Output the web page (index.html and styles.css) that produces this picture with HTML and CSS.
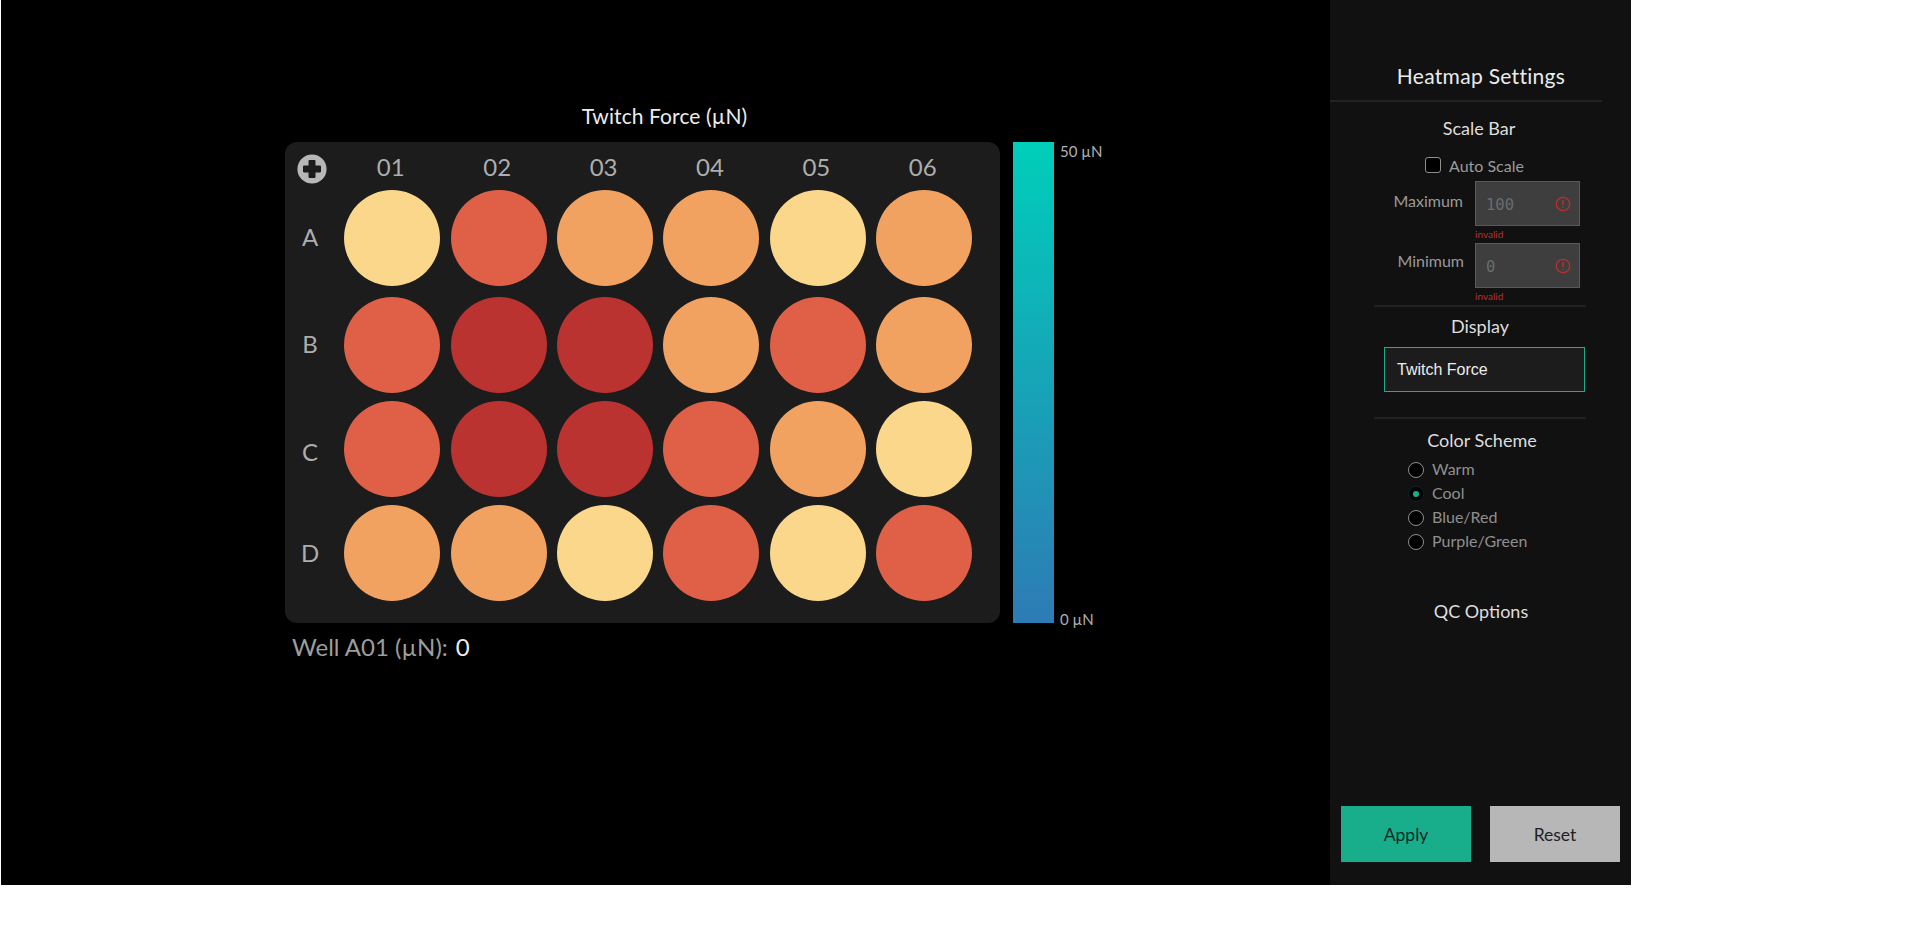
FILE: index.html
```html
<!DOCTYPE html>
<html lang="en">
<head>
<meta charset="utf-8">
<title>Heatmap</title>
<link rel="stylesheet" href="styles.css">
</head>
<body>
<div class="app">
  <main class="stage">
    <h1 class="plate-title">Twitch Force (µN)</h1>
    <div class="plate-row">
      <div class="plate">
        <div class="corner"><svg viewBox="0 0 30 30" width="30" height="30"><circle cx="15" cy="15" r="14.6" fill="#b7b7b7"/><path d="M12 6.500h6v5.500h5.500v6H18v5.500h-6V18H6.500v-6H12z" fill="#1c1c1c" stroke="#1c1c1c" stroke-linejoin="round"/></svg></div>
        <div class="col-head">01</div><div class="col-head">02</div><div class="col-head">03</div><div class="col-head">04</div><div class="col-head">05</div><div class="col-head">06</div>
        <div class="row-head">A</div>
        <div class="well c1"></div><div class="well c2"></div><div class="well c3"></div><div class="well c3"></div><div class="well c1"></div><div class="well c3"></div>
        <div class="row-head">B</div>
        <div class="well c2"></div><div class="well c4"></div><div class="well c4"></div><div class="well c3"></div><div class="well c2"></div><div class="well c3"></div>
        <div class="row-head row-c">C</div>
        <div class="well c2"></div><div class="well c4"></div><div class="well c4"></div><div class="well c2"></div><div class="well c3"></div><div class="well c1"></div>
        <div class="row-head row-d">D</div>
        <div class="well c3"></div><div class="well c3"></div><div class="well c1"></div><div class="well c2"></div><div class="well c1"></div><div class="well c2"></div>
      </div>
      <div class="gradient"></div>
      <div class="scale-labels"><span>50 µN</span><span>0 µN</span></div>
    </div>
    <div class="readout"><span class="readout-label">Well A01 (µN):</span><span class="readout-value">0</span></div>
  </main>
  <aside class="sidebar">
    <h2 class="side-title">Heatmap Settings</h2>
    <h3 class="section-title scale-title">Scale Bar</h3>
    <label class="auto"><span class="check"></span>Auto Scale</label>
    <div class="field field-max">
      <span class="field-label">Maximum</span>
      <div class="field-body">
        <div class="num-input"><span>100</span><svg viewBox="0 0 16 16" width="16" height="16"><circle cx="8" cy="8" r="6.700" fill="none" stroke="#b8302f" stroke-width="1.300"/><path d="M8 4v5M8 10.800v1.300" stroke="#b8302f" stroke-width="1.500" fill="none"/></svg></div>
        <div class="invalid">invalid</div>
      </div>
    </div>
    <div class="field field-min">
      <span class="field-label">Minimum</span>
      <div class="field-body">
        <div class="num-input"><span>0</span><svg viewBox="0 0 16 16" width="16" height="16"><circle cx="8" cy="8" r="6.700" fill="none" stroke="#b8302f" stroke-width="1.300"/><path d="M8 4v5M8 10.800v1.300" stroke="#b8302f" stroke-width="1.500" fill="none"/></svg></div>
        <div class="invalid">invalid</div>
      </div>
    </div>
    <hr class="rule">
    <h3 class="section-title display-title">Display</h3>
    <div class="select">Twitch Force</div>
    <hr class="rule rule-two">
    <h3 class="section-title scheme-title">Color Scheme</h3>
    <div class="radios">
      <label class="radio"><span class="dot"></span>Warm</label>
      <label class="radio"><span class="dot on"></span>Cool</label>
      <label class="radio"><span class="dot"></span>Blue/Red</label>
      <label class="radio"><span class="dot"></span>Purple/Green</label>
    </div>
    <h3 class="section-title qc-title">QC Options</h3>
    <div class="actions">
      <button class="btn apply">Apply</button>
      <button class="btn reset">Reset</button>
    </div>
  </aside>
</div>
</body>
</html>
```

FILE: styles.css
```css
* { box-sizing: border-box; }
html, body { margin: 0; padding: 0; background: #fff; }
body { font-family: "Lato", "Noto Sans", sans-serif; overflow: hidden; height: 930px; }
.app { margin-left: 1px; width: 1630px; height: 885px; display: flex; background: #000; }
.stage { width: 1329px; padding: 103px 0 0 284px; }
.plate-title { margin: 0 0 0 -3px; width: 765px; height: 27px; font-size: 21px; line-height: 26px; font-weight: 400; letter-spacing: .1px; color: #ececec; text-align: center; }
.plate-row { display: flex; margin-top: 12px; }
.plate { width: 715px; height: 481px; background: #1c1c1c; border-radius: 12px; display: grid; grid-template-columns: 54.100px repeat(6, 106.400px); grid-template-rows: 42px 108px 106px 102px 106px; align-items: center; justify-items: center; align-content: start; }
.corner { width: 30px; height: 30px; margin-top: 12px; }
.corner svg { display: block; }
.col-head { font-size: 24px; color: #adadad; margin-top: 7px; margin-right: 3px; }
.row-head { font-size: 24px; color: #adadad; margin: 0 4px 3px 0; }
.row-c { margin-bottom: 0; margin-top: 4px; }
.row-d { margin-bottom: 1px; }
.well { width: 96px; height: 96px; border-radius: 50%; }
.c1 { background: #fad78b; }
.c2 { background: #e06047; }
.c3 { background: #f2a260; }
.c4 { background: #bb3331; }
.gradient { width: 41px; height: 481px; margin-left: 13px; background: linear-gradient(#00ceba, #2d7bb5); }
.scale-labels { height: 481px; margin-left: 6px; display: flex; flex-direction: column; justify-content: space-between; font-size: 15px; line-height: 20px; color: #b0b0b0; }
.scale-labels span:first-child { margin-top: -1px; }
.scale-labels span:last-child { margin-bottom: -6px; }
.readout { display: flex; gap: 8px; margin: 8px 0 0 7px; font-size: 24px; line-height: 32px; }
.readout-label { color: #9d9d9d; }
.readout-value { color: #ececec; }
.sidebar { width: 301px; background: #111; display: flex; flex-direction: column; color: #ececec; }
.side-title { margin: 62px 29px 0 0; height: 40px; padding: 0 0 12px 30px; font-size: 21px; line-height: 27px; font-weight: 400; letter-spacing: .3px; text-align: center; color: #ececec; border-bottom: 2px solid #222; }
.section-title { margin: 0; width: 301px; font-size: 18px; line-height: 24px; font-weight: 400; color: #dedede; text-align: center; }
.scale-title { margin-top: 14px; width: 298px; }
.auto { display: flex; align-items: center; margin: 15px 0 0 95px; height: 20px; font-size: 16px; color: #9a9a9a; }
.check { width: 16px; height: 16px; background: #000; border: 1px solid #8e8e8e; border-radius: 3px; margin-right: 8px; }
.field { display: flex; }
.field-max { margin-top: 6px; }
.field-min { margin-top: 1px; }
.field-label { width: 134px; padding-top: 10px; font-size: 16px; line-height: 20px; color: #9a9a9a; text-align: right; }
.field-min .field-label { padding-top: 8px; }
.field-max .field-label { padding-right: 1px; }
.field-body { margin-left: 11px; }
.num-input { width: 105px; height: 45px; background: #3e3e3e; border: 1px solid #b8302f; display: flex; align-items: center; justify-content: space-between; padding: 0 8px 0 10px; font-family: "DejaVu Sans Mono", "Liberation Mono", monospace; font-size: 15.500px; color: #666c72; }
.num-input span { margin-top: 2px; }
.num-input svg { display: block; }
.invalid { font-size: 10px; line-height: 16px; color: #b8302f; }
.rule { width: 212px; height: 2px; margin: 0 0 0 44px; border: 0; background: #222; }
.field-min + .rule { margin-top: 1px; }
.display-title { margin-top: 7px; width: 300px; }
.select { width: 201px; height: 45px; margin: 9px 0 0 54px; padding-left: 12px; background: #1c1c1c; border: 1px solid #19ae8b; font-family: "Liberation Sans", Arial, sans-serif; font-size: 16px; line-height: 43px; color: #ececec; }
.rule-two { margin-top: 25px; }
.scheme-title { margin-top: 9px; padding-left: 3px; }
.radios { margin: 4px 0 0 78px; display: flex; flex-direction: column; }
.radio { display: flex; align-items: center; height: 24px; font-size: 16px; color: #8f8f8f; }
.dot { width: 16px; height: 16px; margin: 4px 8px 0 0; border-radius: 50%; background: #000; border: 1px solid #8e8e8e; display: flex; align-items: center; justify-content: center; }
.dot.on { border-color: #0c2230; }
.dot.on::after { content: ""; width: 6px; height: 6px; border-radius: 50%; background: #19ae8b; }
.qc-title { margin-top: 47px; padding-left: 1px; }
.actions { margin-top: auto; padding: 0 10px 23px 11px; display: flex; gap: 19px; }
.btn { width: 130px; height: 56px; border: 0; border-radius: 0; font-family: "Lato", sans-serif; font-size: 17.500px; padding: 0; color: #222; }
.apply { background: #19ae8b; color: #0e2a24; }
.reset { background: #b7b7b7; }
```
